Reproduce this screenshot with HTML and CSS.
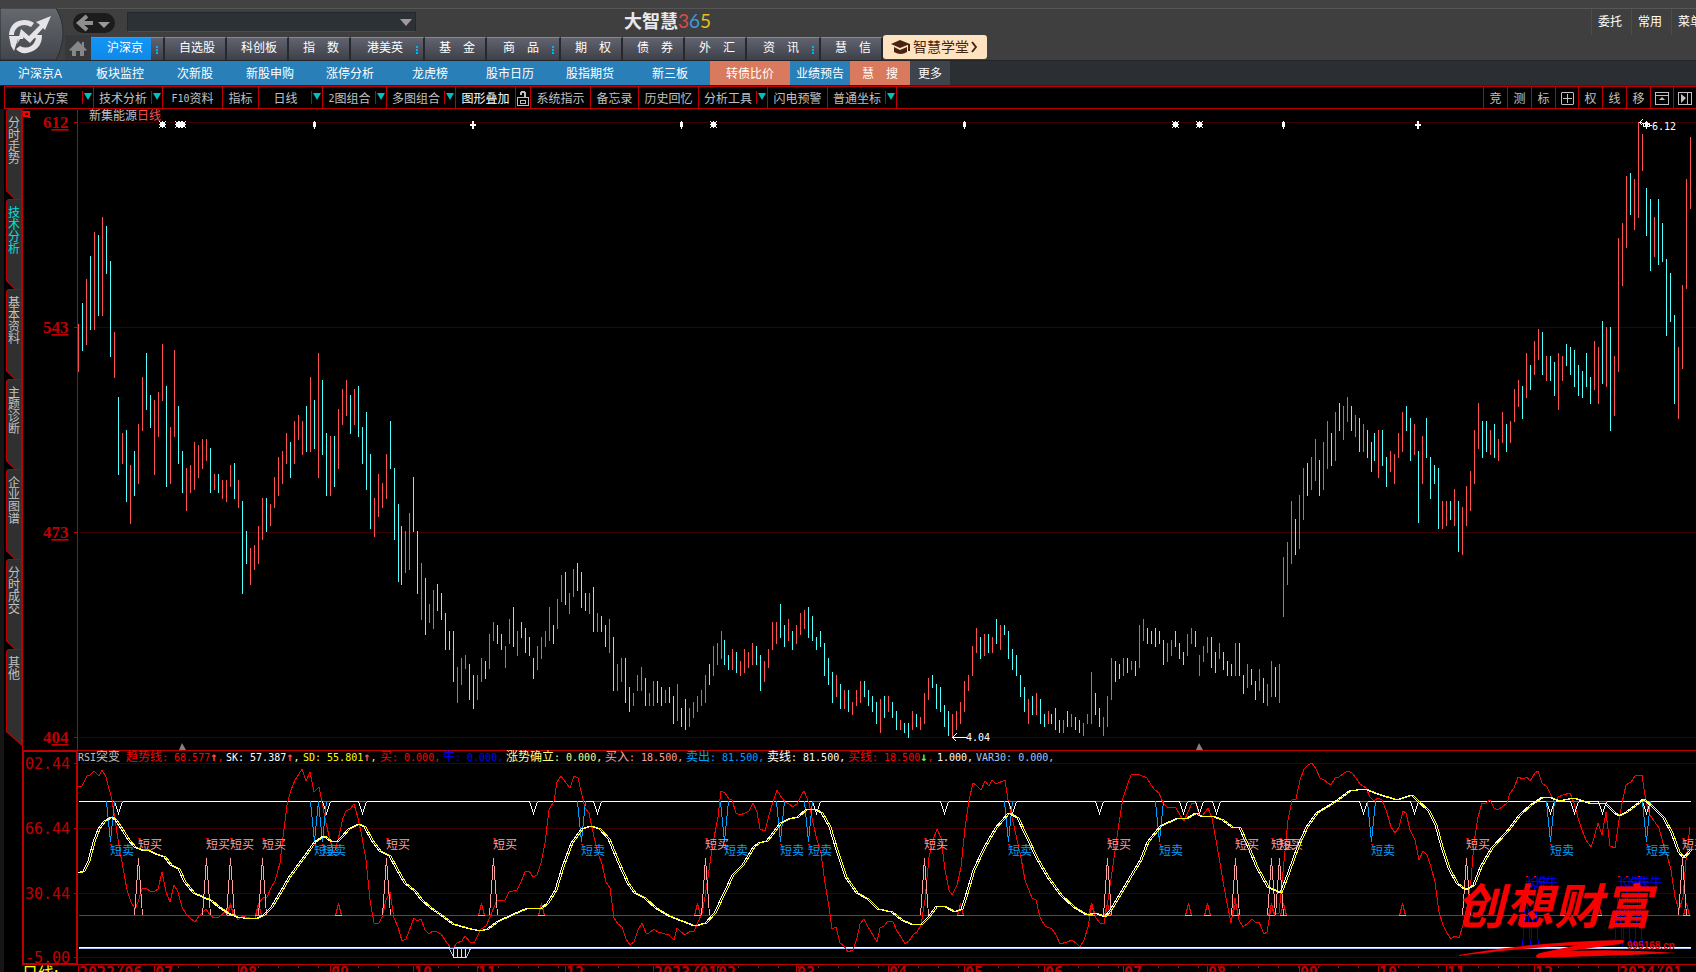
FILE: index.html
```html
<!DOCTYPE html>
<html lang="zh-CN">
<head>
  <meta charset="UTF-8">
  <meta name="viewport" content="width=device-width, initial-scale=1">
  <title>大智慧365</title>
  <link rel="stylesheet" href="styles.css">
</head>
<body>
  <header class="header">
    <div class="logo">
      <svg width="64" height="52" viewBox="0 0 64 52">
        <defs>
          <linearGradient id="metal" x1="0" y1="0" x2="0" y2="1">
            <stop offset="0" stop-color="#666a6f"/>
            <stop offset="1" stop-color="#42464c"/>
          </linearGradient>
        </defs>
        <path d="M0 0H56Q63 12 63 25T56 52H0Z" fill="url(#metal)" stroke="#2b2e33"/>
        <g fill="#e4e4e8">
          <path d="M9 27Q10 13 24 12Q30 12 34 15L31 19Q24 15 18 19Q14 22 14 27Z"/>
          <path d="M42 27Q42 42 27 45Q20 46 16 41L20 38Q26 41 31 38Q35 35 36 30L29 31L30 27Z"/>
          <path d="M9 28H24L23 31L18 31L14 43L11 38Z"/>
          <path d="M21 21L29 28L40 17L36 14L51 8L45 22L43 20L30 35L22 28L17 36Z"/>
        </g>
      </svg>
    </div>
    <div class="header-main">
      <div class="header-top">
        <button class="back" aria-label="返回">
          <svg width="42" height="20" viewBox="0 0 42 20">
            <path d="M14 3L6 10L14 17M6 10H20" fill="none" stroke="#8f8f8f" stroke-width="4"/>
            <path d="M25 9H37L31 15Z" fill="#9a9a9a"/>
          </svg>
        </button>
        <div class="search">
          <select class="search-select" aria-label="代码"><option></option></select>
          <svg class="search-arrow" width="12" height="8"><path d="M0 0H12L6 7Z" fill="#a39a9a"/></svg>
        </div>
        <h1 class="brand">大智慧<span class="d3">3</span><span class="d6">6</span><span class="d5">5</span></h1>
        <div class="user-menu">
          <button>委托</button>
          <button>常用</button>
          <button>菜单</button>
        </div>
      </div>
      <nav class="nav">
        <button class="home" aria-label="首页">
          <svg width="18" height="17" viewBox="0 0 18 17"><path d="M9 1L13 5V2H15V7L18 10L16 11L15 10V16H11V11H7V16H3V10L2 11L0 10Z" fill="#878787"/></svg>
        </button>
        <button class="tab dots active">沪深京</button>
        <button class="tab">自选股</button>
        <button class="tab">科创板</button>
        <button class="tab">指　数</button>
        <button class="tab dots">港美英</button>
        <button class="tab">基　金</button>
        <button class="tab dots">商　品</button>
        <button class="tab">期　权</button>
        <button class="tab">债　券</button>
        <button class="tab">外　汇</button>
        <button class="tab dots">资　讯</button>
        <button class="tab">慧　信</button>
        <button class="school">
          <svg width="20" height="16" viewBox="0 0 20 16">
            <path d="M0 5L9 1L19 5L9 9Z" fill="#4a2310"/>
            <path d="M3 8L9 11L16 8V13Q10 17 3 13Z" fill="#4a2310"/>
            <path d="M18 5V12" stroke="#4a2310" stroke-width="2"/>
          </svg>
          智慧学堂
          <svg width="6" height="12" viewBox="0 0 6 12"><path d="M1 1L5 6L1 11" fill="none" stroke="#4a2310" stroke-width="2"/></svg>
        </button>
      </nav>
    </div>
  </header>

  <nav class="subnav">
    <a href="#">沪深京A</a>
    <a href="#">板块监控</a>
    <a href="#" class="w70">次新股</a>
    <a href="#">新股申购</a>
    <a href="#">涨停分析</a>
    <a href="#">龙虎榜</a>
    <a href="#">股市日历</a>
    <a href="#">股指期货</a>
    <a href="#">新三板</a>
    <a href="#" class="hot">转债比价</a>
    <a href="#" class="w60">业绩预告</a>
    <a href="#" class="w60 hot">慧　搜</a>
    <a href="#" class="w40 more">更多</a>
  </nav>

  <div class="toolbar">
    <button class="w89 drop">默认方案</button>
    <button class="w69 drop">技术分析</button>
    <button class="w60"><span class="num">F10</span>资料</button>
    <button class="w36">指标</button>
    <button class="w64 drop">日线</button>
    <button class="w64 drop"><span class="num">2</span>图组合</button>
    <button class="w69 drop">多图组合</button>
    <button class="w60 on">图形叠加</button>
    <button class="w15" aria-label="锁定">
      <svg width="12" height="15" viewBox="0 0 12 15" fill="#c0c0c0">
        <path d="M0 6H12V15H0ZM1 7V14H11V7Z" fill-rule="evenodd"/>
        <path d="M3 9H9V13H3ZM4 10V12H8V10Z" fill-rule="evenodd"/>
        <path d="M3 3V1H4V0H8V1H9V6H7V2H5V4H3Z"/>
      </svg>
    </button>
    <button class="w60">系统指示</button>
    <button class="w48">备忘录</button>
    <button class="w60">历史回忆</button>
    <button class="w69 drop">分析工具</button>
    <button class="w60">闪电预警</button>
    <button class="w69 drop">普通坐标</button>
    <div class="toolbar-right">
      <button class="w24">竞</button>
      <button class="w24">测</button>
      <button class="w24">标</button>
      <button class="w23" aria-label="十字">
        <svg width="13" height="13" viewBox="0 0 13 13"><path d="M1 0H12L13 1V12L12 13H1L0 12V1Z" fill="#c0c0c0"/><path d="M1 1H12V12H1Z" fill="#000"/><path d="M2 6H11V7H2ZM6 2H7V11H6Z" fill="#c0c0c0"/></svg>
      </button>
      <button class="w24">权</button>
      <button class="w24">线</button>
      <button class="w24">移</button>
      <button class="w23" aria-label="展开">
        <svg width="14" height="13" viewBox="0 0 14 13"><path d="M0 0H14V13H0Z" fill="#c0c0c0"/><path d="M1 1H13V3H1ZM1 4H13V12H1Z" fill="#000"/><path d="M7 5L10 8H4Z" fill="#c0c0c0"/></svg>
      </button>
      <button class="w23" aria-label="下一页">
        <svg width="14" height="13" viewBox="0 0 14 13"><path d="M0 0H14V13H0Z" fill="#c0c0c0"/><path d="M1 1H9V12H1ZM10 1H13V12H10Z" fill="#000"/><path d="M3 2L8 6L3 11Z" fill="#c0c0c0"/></svg>
      </button>
    </div>
  </div>

  <main class="main">
    <aside class="side">
      <button class="side-tab">分时走势</button>
      <button class="side-tab active">技术分析</button>
      <button class="side-tab">基本资料</button>
      <button class="side-tab">主题诊断</button>
      <button class="side-tab">企业图谱</button>
      <button class="side-tab">分时成交</button>
      <button class="side-tab last">其他</button>
    </aside>
    <div class="chart">
      <svg id="chart" viewBox="22 109 1674 863"></svg>
    </div>
  </main>

  <script src="script.js"></script>
</body>
</html>
```
FILE: styles.css
```css
* {
  box-sizing: border-box;
}

body {
  margin: 0;
  background: #000;
  color: #fff;
  font-family: "Liberation Sans", "Noto Sans CJK SC", sans-serif;
  font-size: 12px;
  line-height: 16px;
  overflow: hidden;
}

button {
  margin: 0;
  padding: 0;
  border: none;
  background: none;
  color: inherit;
  font: inherit;
  white-space: nowrap;
  flex: none;
  cursor: pointer;
}

.num {
  font-family: "DejaVu Sans Mono", monospace;
  font-size: 10px;
}

/* header */
.header {
  display: flex;
  padding-top: 8px;
  background: linear-gradient(#424242 8px, #565656 8px, #565656 9px, #3f3f3f 9px);
  border-bottom: 1px solid #222428;
}

.logo {
  width: 65px;
  height: 52px;
}

.logo svg {
  display: block;
}

.header-main {
  flex: 1;
  min-width: 0;
}

.header-top {
  display: flex;
  align-items: center;
  height: 27px;
  padding-left: 8px;
  overflow: hidden;
}

.back {
  width: 42px;
  height: 20px;
  margin-top: 3px;
  border-radius: 10px;
  background: #1c1c1c;
}

.back svg {
  display: block;
}

.search {
  position: relative;
  width: 289px;
  height: 20px;
  margin-left: 12px;
}

.search-select {
  appearance: none;
  width: 100%;
  height: 20px;
  border: 1px solid #25292d;
  border-bottom-color: #4a4d50;
  border-radius: 0;
  background: #2c3135;
}

.search-arrow {
  position: absolute;
  right: 4px;
  top: 7px;
}

.brand {
  margin: 0 0 0 208px;
  color: #e8e8ee;
  font-size: 18px;
  font-weight: bold;
  line-height: 26px;
}

.brand span {
  font-family: Lato, sans-serif;
  font-size: 19px;
  font-weight: 400;
}

.d3 { color: #dd4b45; }
.d6 { color: #3a9be0; }
.d5 { color: #e6bf1e; }

.user-menu {
  display: flex;
  margin-left: auto;
  margin-right: -15px;
}

.user-menu button {
  width: 40px;
  height: 26px;
  padding-left: 6px;
  border-left: 1px solid #4a4c50;
  text-align: left;
}

.nav {
  display: flex;
  align-items: flex-end;
  height: 25px;
}

.home {
  width: 26px;
  height: 25px;
  padding-top: 5px;
  background: #36383b;
}

.tab {
  width: 62px;
  height: 23px;
  padding: 0 0 2px 4px;
  border-top: 1px solid #858994;
  border-right: 2px solid #26282c;
  background: linear-gradient(#61646f, #3d4048);
}

.tab.dots {
  width: 74px;
  padding-right: 8px;
  background:
    radial-gradient(#00b4ff, #00b4ff) right 5px top 8px / 2px 2px no-repeat,
    radial-gradient(#00b4ff, #00b4ff) right 5px top 11px / 2px 2px no-repeat,
    radial-gradient(#00b4ff, #00b4ff) right 5px top 14px / 2px 2px no-repeat,
    linear-gradient(#61646f, #3d4048);
}

.tab.active {
  background:
    radial-gradient(#00b4ff, #00b4ff) right 5px top 8px / 2px 2px no-repeat,
    radial-gradient(#00b4ff, #00b4ff) right 5px top 11px / 2px 2px no-repeat,
    radial-gradient(#00b4ff, #00b4ff) right 5px top 14px / 2px 2px no-repeat,
    linear-gradient(#1296f5, #1088ea) left / 60px 100% no-repeat,
    linear-gradient(#61646f, #3d4048);
}

.school {
  display: flex;
  align-items: center;
  gap: 2px;
  width: 104px;
  height: 24px;
  margin-bottom: 1px;
  padding-left: 8px;
  border-radius: 3px;
  background: #fde3c0;
  color: #4a2310;
  font-size: 14px;
}

/* blue menu */
.subnav {
  display: flex;
  height: 25px;
  background: #2b2e33;
  border-bottom: 1px solid #222428;
}

.subnav a {
  width: 80px;
  flex: none;
  background: #2980b9;
  color: #fff;
  line-height: 26px;
  height: 24px;
  text-align: center;
  text-decoration: none;
}

.subnav .w70 { width: 70px; }
.subnav .w60 { width: 60px; }
.subnav .w40 { width: 40px; }
.subnav .hot { background: #d9795d; }
.subnav .more { background: #3f434b; }

/* red framed toolbar */
.toolbar {
  display: flex;
  height: 23px;
  margin-left: 4px;
  border: 1px solid #c00000;
  border-right: none;
  color: #c0c0c0;
}

.toolbar button {
  display: flex;
  align-items: center;
  justify-content: center;
  height: 21px;
  padding-top: 2px;
  border-right: 1px solid #c00000;
}

.toolbar .drop {
  padding-right: 10px;
  background:
    linear-gradient(#c00000, #c00000) right 10px center / 1px 13px no-repeat;
  position: relative;
}

.toolbar .drop::after {
  content: "";
  position: absolute;
  right: 1px;
  top: 6px;
  border: 4px solid transparent;
  border-top: 7px solid #00c0c0;
  border-bottom: none;
}

.toolbar .on { color: #fff; }
.w15 { width: 15px; }
.w23 { width: 23px; }
.w24 { width: 24px; }
.w36 { width: 36px; }
.w48 { width: 48px; }
.toolbar .w60 { width: 60px; }
.w64 { width: 64px; }
.w69 { width: 69px; }
.w89 { width: 89px; }

.toolbar-right {
  display: flex;
  margin-left: auto;
  margin-right: -1px;
  border-left: 1px solid #c00000;
}

/* body */
.main {
  display: flex;
}

.side {
  width: 22px;
  flex: none;
  border-left: 4px solid #161616;
  padding-left: 2px;
}

.side-tab {
  position: relative;
  display: flex;
  align-items: flex-start;
  z-index: 0;
  width: 16px;
  height: 90px;
  padding: 8px 2px 0;
  background: #c00000;
  clip-path: polygon(0 2px, 2px 0, 100% 0, 100% 100%, 8px 100%, 0 82px);
  color: #c0c0c0;
  line-height: 12px;
  text-align: left;
  white-space: normal;
  word-break: break-all;
}

.side-tab::before {
  content: "";
  position: absolute;
  inset: 1px 1px 0 1px;
  background: #303030;
  clip-path: polygon(0 1px, 1px 0, 100% 0, 100% 100%, 8px 100%, 0 80px);
  z-index: -1;
}

.side-tab.active {
  color: #00e0e0;
}

.side-tab.last {
  height: 97px;
  clip-path: polygon(0 2px, 2px 0, 100% 0, 100% 100%, 0 83px);
}

.side-tab.last::before {
  clip-path: polygon(0 1px, 1px 0, 100% 0, 100% 94px, 0 81px);
}

.chart {
  flex: 1;
  min-width: 0;
}

.chart svg {
  display: block;
  width: 100%;
  height: auto;
}

.line {
  fill: none;
  shape-rendering: crispEdges;
}

.grid { stroke: #380000; }
.frame { stroke: #c00000; }
.up { stroke: #ff5050; }
.down { stroke: #50ffff; }
.red { stroke: #ff0000; }
.white { stroke: #fff; }
.yellow { stroke: #ffff00; }
.ice { stroke: #a8c4f0; }
.pink { stroke: #ffa0a0; }
.sky { stroke: #00a0ff; }
.blue { stroke: #0000e0; }

.t-small {
  font-family: "DejaVu Sans Mono", monospace;
  font-size: 10px;
}

.t-cjk {
  font-family: "Noto Sans CJK SC", sans-serif;
  font-size: 12px;
}

.t-arrow {
  font-size: 12px;
  font-weight: bold;
}

.t-price {
  font-family: "Liberation Serif", serif;
  font-size: 17px;
  font-weight: bold;
  fill: #c00000;
}

.t-axis {
  font-family: "DejaVu Sans Mono", monospace;
  font-size: 15px;
  fill: #c00000;
}

.t-date {
  font-weight: bold;
}

.t-period {
  font-family: "Noto Sans CJK SC", sans-serif;
  font-size: 16px;
  fill: #ffff00;
}

.t-mark {
  font-family: "Noto Sans CJK SC", sans-serif;
  font-size: 48px;
  font-weight: bold;
  font-style: italic;
  fill: #f80000;
}

.t-site {
  font-family: "Liberation Sans", sans-serif;
  font-size: 10px;
  font-weight: bold;
  fill: #e00000;
}
```
FILE: script.js
```js
const svg = document.getElementById('chart');

// r = up day, c = down day, high-low in chart units; each group starts at x
const groups = [
  { x: 78, bars: 'r324-372 c303-351 r279-345 c256-330 r232-330 c235-316 r217-316 c226-274 c261-357 r332-378 c397-475 r433-464 c430-502 r465-524 c451-496 r424-484 r377-431 c353-410 c395-428 r400-475 r392-437 r344-401 c386-487 r427-484 r350-437 c406-464 c451-493 r468-511 r465-493 r442-490 r445-478 r439-469 r439-461 c448-493 r474-490 c474-493 r480-499 r480-502 r465-487 c463-499 r480-508 c501-594 c531-564 r548-585 r545-570 r526-564 r498-540 c498-532 r504-526 r477-508 r457-496 r451-484 r433-464 c442-478 r421-464 r415-440 r421-455 c406-452 r377-452 c400-449 r353-478 c380-455 c433-496 r436-496 c436-487 r409-469 r389-425 r380-416 c395-434 r389-425 c386-437 c427-464 c412-490 c454-529 r498-537 r474-517 r483-508 r454-499 c421-469 c468-540 c504-582' },
  { x: 401, bars: 'c526-585 r531-573 r513-570 c477-532 c531-594 r563-620 c578-635 r604-623 r590-629 c584-611 c593-620 c613-650 c631-650 c631-682 r667-703 r658-685 r655-669 c664-700 c675-709 r675-700 r658-682 c661-679 r634-669 r622-641 c625-644 c634-650 r646-668 r619-644 c607-647 r631-656 c622-638 c628-653 c637-656 c658-679 r646-670 r637-659 r631-647 r607-641 c625-644 r599-629 r575-602 c572-605 r593-614 r569-597 c563-591 c572-608 c593-611 r593-614 c587-632 r613-632 c616-632 c625-647 r619-653 c637-691 r664-691 r658-682 c658-703 c687-712 r693-706 r675-691 r667-691 c678-706 r693-706 r681-706 c681-703 c687-706 r690-703 c687-703 c696-724 r684-721 c708-727 c699-730 r708-727 r702-718 r696-712 r690-706 r675-703 c664-685 r646-676 r643-665 r631-659' },
  { x: 724, bars: 'c640-665 c655-670 r649-670 c652-673 r661-676 r649-673 r652-668 r643-665 c646-665 c655-691 r661-682 r649-668 r622-650 r622-644 c604-638 c625-647 r619-641 c631-650 r625-644 r613-635 r610-629 c607-638 c616-641 c637-650 c631-647 c643-676 c658-685 c672-703 r675-697 c684-709 r690-709 c690-712 r702-715 r690-706 r681-703 c681-697 c690-706 c696-712 c702-724 r699-733 c696-718 r696-712 c702-718 c711-730 r720-730 c723-733 c723-738 r711-730 c714-727 r717-730 r693-724 r678-700 c675-688 c684-709 c687-712 c705-727 c711-736 r714-737 r711-730 r702-724 r681-712 r675-691 r646-676 r628-653 c637-659 r634-656 c634-653 r637-653 c619-644 r625-650 c625-635 c631-659 c649-670 c655-676 c675-697 c687-712 r699-724 c696-715 r693-715 c699-724 c714-727 r711-724' },
  { x: 1051, bars: 'c714-724 c708-730 c720-733 r720-733 c711-727 r714-727 c717-730 c720-733 r723-736 r714-724 r672-724 c693-715 c708-727 r717-736 r696-727 r658-700 c661-682 c664-679 r658-676 c658-673 r661-670 c661-676 r625-668 r619-641 c628-644 c631-644 c628-647 c631-644 c640-665 r643-662 r640-656 c631-647 c643-659 c652-665 r634-656 r628-644 c631-647 r655-676 r646-662 r637-653 c637-668 c652-673 r643-659 c652-670 c661-676 c664-676 r643-676 c643-676 c675-694 r664-688 c669-685 c681-700 r669-691 c678-703 r684-706 r661-697 c667-697 r664-703 r557-617 r542-585 r501-564 c519-555 r495-549 r468-520 c463-496 r457-490 r439-481 c460-496 r442-490 r421-469 c433-466 r412-461 c403-431 r406-440 r397-422 c406-431 r415-437 c418-452 r424-452 c430-458 c442-472' },
  { x: 1374, bars: 'c433-461 r430-478 c430-466 c457-487 r451-472 r454-484 r433-458 r412-452 c406-431 c418-461 r424-455 c451-523 r436-484 c418-458 c457-499 c465-484 c468-529 r501-529 r501-526 c501-520 r489-526 c501-552 r507-555 r486-526 r471-511 r430-484 r403-449 c421-458 c421-452 r430-455 c424-458 r439-461 r412-443 c424-452 r421-443 r389-422 r380-407 c386-419 r353-398 c365-390 r341-375 r329-360 c332-375 r356-381 c356-381 c362-396 r353-410 r356-381 c344-366 c347-375 c350-387 c365-396 c371-398 c353-387 c377-404 r341-390 r347-404 c321-384 r327-387 c327-431 r356-416 r238-372 r223-286 r176-248 c173-215 r179-230 r122-218 r134-171 c188-236 c199-271 r217-257 c199-265 c223-262 c259-336 c273-322 c315-404 r347-419 r285-369 r179-289 r137-209' }
];

const trend = '78,786 82,786 87,776 90,775 94,771 99,776 102,770 106,777 112,800 115,820 120,851 124,873 127,890 131,902 135,909 138,902 142,889 146,888 150,891 154,892 158,889 162,872 166,892 170,902 174,885 178,892 182,907 186,914 190,918 195,922 199,916 202,913 206,909 210,915 214,918 219,917 226,911 230,906 234,912 238,920 242,916 250,918 255,919 259,903 263,898 267,897 271,888 275,881 280,863 283,837 287,805 291,790 295,780 299,774 302,769 306,781 310,772 314,792 319,787 322,802 326,823 330,840 334,853 338,840 343,818 346,811 350,809 354,804 358,818 362,837 366,860 370,900 374,923 379,923 382,917 386,900 390,892 394,918 398,927 402,941 406,939 414,918 417,921 421,919 425,930 429,934 433,931 437,932 441,934 445,940 450,947 454,947 457,943 462,941 465,936 470,942 474,943 477,937 481,929 486,926 490,917 494,907 497,900 505,900 509,892 517,890 521,882 525,872 529,871 533,877 537,875 541,863 545,843 549,810 554,801 557,782 561,776 566,783 570,788 574,776 578,778 582,795 585,808 589,813 594,837 598,853 602,864 606,882 610,888 614,918 618,924 622,927 626,939 630,945 634,942 638,930 642,923 646,933 649,933 654,929 658,932 669,935 674,940 677,928 681,932 685,935 689,932 694,931 698,922 702,913 705,897 709,870 713,843 718,817 721,791 725,793 729,799 732,800 736,813 740,815 745,813 749,811 753,803 757,812 760,829 765,831 769,815 773,802 777,790 780,795 785,802 789,804 793,807 797,804 801,796 804,791 809,803 813,823 817,840 821,853 825,883 829,907 832,929 836,927 840,943 844,946 848,952 853,950 857,938 860,924 864,919 868,927 873,935 877,942 880,928 884,926 888,921 893,922 897,931 901,937 905,944 909,941 913,935 917,932 921,925 925,900 929,857 933,840 937,829 941,838 945,870 949,890 952,895 957,885 961,867 965,828 969,800 973,783 976,785 981,790 985,781 989,786 992,780 996,784 1005,780 1008,800 1012,817 1016,835 1021,858 1025,880 1032,898 1036,900 1040,917 1045,926 1052,929 1056,935 1060,944 1067,942 1072,940 1076,943 1080,947 1084,940 1088,927 1092,904 1096,918 1100,923 1104,924 1108,900 1114,858 1119,823 1123,798 1128,783 1131,775 1135,774 1140,775 1147,778 1151,785 1155,790 1159,793 1163,803 1167,807 1176,808 1180,815 1184,821 1188,812 1192,803 1196,803 1199,815 1203,815 1208,808 1212,818 1216,840 1220,863 1224,887 1228,908 1231,923 1235,898 1239,920 1243,927 1248,923 1252,919 1256,923 1259,922 1264,934 1267,932 1271,908 1275,913 1279,913 1283,872 1288,820 1292,800 1296,799 1300,780 1304,769 1308,765 1312,763 1316,769 1320,778 1324,780 1328,783 1331,785 1335,778 1339,777 1344,773 1348,771 1352,773 1356,778 1360,784 1366,788 1370,797 1374,801 1378,798 1382,800 1387,813 1391,827 1395,833 1399,827 1403,811 1406,813 1410,830 1415,840 1419,860 1423,851 1427,855 1431,867 1435,882 1439,912 1443,925 1447,933 1451,939 1455,936 1459,938 1463,925 1467,907 1471,880 1474,843 1478,817 1482,803 1486,803 1490,800 1494,808 1498,810 1502,807 1507,803 1510,793 1514,788 1518,777 1523,779 1527,777 1530,781 1535,773 1538,771 1542,783 1547,787 1551,795 1555,803 1558,797 1563,795 1570,793 1574,803 1578,818 1582,830 1586,840 1591,847 1594,838 1598,823 1602,835 1606,812 1610,846 1615,848 1619,820 1622,803 1626,785 1631,782 1635,776 1642,775 1646,802 1650,815 1659,828 1663,843 1667,855 1671,870 1675,897 1679,910 1683,897 1686,860 1690,827';

const sk = '78,873 83,871 88,861 93,842 98,829 104,821 111,817 115,820 121,829 128,840 134,847 141,850 149,851 155,854 164,857 170,865 178,869 184,882 193,893 202,897 211,901 218,907 227,913 236,917 243,918 255,919 263,915 271,907 280,892 288,878 296,867 305,855 314,842 323,836 330,841 336,842 341,837 348,829 358,824 364,827 371,840 379,851 389,856 396,869 404,883 414,891 421,900 430,908 443,917 452,924 466,928 479,931 487,929 496,922 511,915 527,908 540,909 547,903 555,890 562,867 571,843 581,829 590,826 599,829 608,839 618,863 627,883 634,893 644,898 655,908 668,916 681,921 694,926 705,923 714,913 725,890 732,875 742,865 753,847 758,843 766,841 771,835 780,823 788,819 797,817 806,809 814,809 821,813 829,827 836,850 845,877 856,893 867,899 877,909 891,912 901,920 910,924 921,924 928,917 936,906 945,907 954,912 961,909 965,897 973,870 984,847 995,828 1008,813 1017,818 1025,835 1036,858 1047,877 1060,895 1073,907 1086,915 1095,913 1104,917 1110,910 1119,895 1132,873 1140,860 1147,842 1160,826 1175,819 1187,818 1195,813 1200,816 1211,816 1222,820 1231,827 1239,828 1246,843 1256,867 1267,887 1280,893 1288,872 1297,847 1306,827 1316,813 1334,802 1349,791 1364,789 1377,794 1396,800 1411,795 1416,800 1428,811 1435,825 1441,847 1448,868 1456,883 1465,890 1473,885 1480,867 1491,848 1506,832 1519,815 1530,805 1542,797 1551,798 1558,801 1573,798 1588,803 1605,804 1613,812 1618,816 1626,812 1643,799 1652,807 1663,818 1671,833 1678,852 1683,858 1690,850';

const buys = [138, 206, 230, 262, 386, 493, 705, 924, 1107, 1235, 1271, 1279, 1466, 1682];
const sells = [110, 314, 322, 581, 724, 780, 808, 1008, 1159, 1371, 1550, 1646];
const bulls = [1526, 1534, 1618, 1626, 1638];
const peaks = [118, 326, 362, 533, 597, 816, 944, 1012, 1099, 1183, 1199, 1216, 1363, 1414, 1550, 1574, 1602, 1646];
const bottoms = [230, 258, 338, 481, 541, 697, 960, 1091, 1107, 1188, 1207, 1235, 1271, 1283, 1402, 1563, 1598, 1686];

const months = [[78, '2022/06'], [154, '07'], [238, '08'], [330, '09'], [413, '10'], [477, '11'], [565, '12'],
  [653, '2023/01'], [717, '02'], [796, '03'], [888, '04'], [964, '05'], [1044, '06'], [1123, '07'],
  [1207, '08'], [1299, '09'], [1378, '10'], [1446, '11'], [1534, '12'], [1618, '2024/01']];

// [x, name, value, colour, arrow]
const legend = [
  [126, '趋势线', ': 68.577', '#ff0000', '↑'],
  [226, '', 'SK: 57.387', '#ffffff', '↑'],
  [303, '', 'SD: 55.801', '#ffff00', '↑'],
  [380, '买', ': 0.000', '#ff0000'],
  [443, '牛', ': 0.000', '#0000ff'],
  [506, '涨势确立', ': 0.000', '#ffff80'],
  [605, '买入', ': 18.500', '#ffa0a0'],
  [686, '卖出', ': 81.500', '#00a0ff'],
  [767, '卖线', ': 81.500', '#ffffff'],
  [848, '买线', ': 18.500', '#ff0000', '↓'],
  [937, '', '1.000', '#ffffff'],
  [976, '', 'VAR30: 0.000', '#a8c4f0']
];

let out = '';

function line(d, cls) {
  out += `<path class="line ${cls}" transform="translate(.5 .5)" d="${d}"/>`;
}

function text(x, y, s, cls, fill) {
  out += `<text x="${x}" y="${y}" class="${cls}"${fill ? ` fill="${fill}"` : ''}>${s}</text>`;
}

// grid and frames
line([122, 327, 532, 737, 763, 828, 893, 957].map(y => `M78 ${y}H1696`).join(''), 'grid');
line('M77 109V750M22 109V964M22 750H1696M22 751H77M23 751V963M23 963H77M76 751V963M77 751V963M22 964H1696', 'frame');
line([122, 327, 532, 737, 763, 828, 893, 957].map(y => `M73 ${y}H76`).join(''), 'frame');

[[122, '6', '12'], [327, '5', '43'], [532, '4', '73'], [737, '4', '04']].forEach(([y, a, b]) => {
  text(43, y + 6, `${a}<tspan text-decoration="underline">${b}</tspan>`, 't-price');
});
text(25, 769, '02.44', 't-axis');
text(25, 834, '66.44', 't-axis');
text(25, 899, '30.44', 't-axis');
text(25, 963, '-5.00', 't-axis');

// daily bars, one path for each colour
let ups = '';
let downs = '';
groups.forEach(g => {
  g.bars.split(' ').forEach((bar, i) => {
    const [hi, lo] = bar.slice(1).split('-');
    const seg = `M${g.x + i * 4} ${hi}V${lo}`;
    if (bar[0] === 'r') ups += seg;
    else downs += seg;
  });
});
out += `<path class="line up" transform="translate(.5 0)" d="${ups}"/>`;
out += `<path class="line down" transform="translate(.5 0)" d="${downs}"/>`;

// title of the price pane
out += '<path d="M23 111H30V117H31V118H28V117H23ZM25 113V115H28V113Z" fill="#ff0000" fill-rule="evenodd"/>';
text(89, 120, '新集能源<tspan fill="#ff5050">日线</tspan>', 't-cjk', '#c0c0c0');

// event marks along the top
const star = x => `M${x - 2} 122h5v5h-5zM${x - 3} 121h1v1h-1zM${x} 121h1v7h-1zM${x + 3} 121h1v1h-1zM${x - 3} 124h7v1h-7zM${x - 3} 127h1v1h-1zM${x + 3} 127h1v1h-1z`;
const diamond = x => `M${x} 121h1v1h1v5h-1v2h-1v-2h-1v-5h1z`;
const plus = x => `M${x - 1} 121h2v3h2v2h-2v3h-2v-3h-2v-2h2z`;
out += `<path fill="#fff" shape-rendering="crispEdges" d="${[162, 178, 182, 713, 1175, 1199].map(star).join('')}${[314, 681, 964, 1283, 1646].map(diamond).join('')}${[473, 1418].map(plus).join('')}"/>`;
out += '<path fill="#808080" d="M182 743L186 750H179ZM1199 743L1203 750H1196Z"/>';
line('M1639 122L1642 119M1639 122L1642 125M1639 122L1652 125M1643 123H1649V126H1643ZM1644 124H1649M952 737H966M952 737L956 733M952 737L956 741', 'white');
text(1652, 130, '6.12', 't-small', '#fff');
text(966, 741, '4.04', 't-small', '#fff');

// indicator legend
text(78, 761, '<tspan class="t-small">RSI</tspan>突变', 't-cjk', '#c0c0c0');
legend.forEach(([x, name, value, color, arrow]) => {
  const mark = arrow ? `<tspan class="t-arrow" fill="${arrow === '↑' ? '#ff5050' : '#50ff50'}">${arrow}</tspan>` : '';
  text(x, 761, `${name}<tspan class="t-small">${value}${mark},</tspan>`, 't-cjk', color);
});

// indicator levels
line('M78 801H1690', 'white');
line('M78 915H1690', 'red');
line('M78 947H1690', 'white');
line('M78 948H1690', 'ice');

out += `<polyline class="line red" points="${trend}"/>`;
line(bottoms.map(x => `M${x - 3} 915L${x} 903L${x + 3} 915`).join(''), 'red');
line(bottoms.map(x => `M${x - 4} 915h7`).join(''), 'pink');
line(buys.map(x => `M${x - 4} 915L${x} 858L${x + 4} 915`).join(''), 'pink');
line(peaks.map(x => `M${x - 4} 801L${x} 813L${x + 4} 801`).join(''), 'white');
line(peaks.map(x => `M${x - 4} 801h8`).join(''), 'sky');
line(sells.map(x => `M${x - 4} 801L${x} 841L${x + 4} 801`).join(''), 'sky');
line(bulls.map(x => `M${x - 4} 946L${x} 886L${x + 4} 946`).join(''), 'blue');
line('M449 948L453 957H466L470 948', 'ice');
line('M453 948V957M457 948V957M461 948V957M465 948V957M453 957H465', 'yellow');

out += `<polyline class="line white" points="${sk}"/>`;
out += `<polyline class="line yellow" transform="translate(2)" points="${sk}"/>`;

buys.forEach(x => text(x, 849, '短买', 't-cjk', '#ffa0a0'));
sells.forEach(x => text(x, 855, '短卖', 't-cjk', '#00a0ff'));
bulls.forEach(x => text(x, 887, '长牛', 't-cjk', '#0000ff'));
line(buys.map(x => `M${x - 1} 838h2`).join('') + sells.map(x => `M${x - 1} 844h2`).join('') + bulls.map(x => `M${x - 1} 876h2`).join(''), 'red');

// time axis
let ticks = '';
for (let x = 98; x < 1690; x += 20) ticks += `M${x} 965V967`;
months.forEach(([x, label]) => {
  ticks += `M${x} 965V972`;
  text(x + 1, 978, label, 't-axis t-date');
});
line(ticks, 'frame');
text(22, 979, '日线:', 't-period');

// site stamp
['创', '想', '财', '富'].forEach((c, i) => text(1456 + i * 49, 924, c, 't-mark'));
out += '<path fill="#f80000" d="M1459 955Q1530 942 1622 940Q1628 941 1620 944L1570 951Q1620 949 1676 953Q1630 955 1538 958Q1533 956 1540 953L1578 945Q1510 949 1459 956Z"/>';
text(1627, 949, '995168.cn', 't-site');

svg.innerHTML = out;
```
